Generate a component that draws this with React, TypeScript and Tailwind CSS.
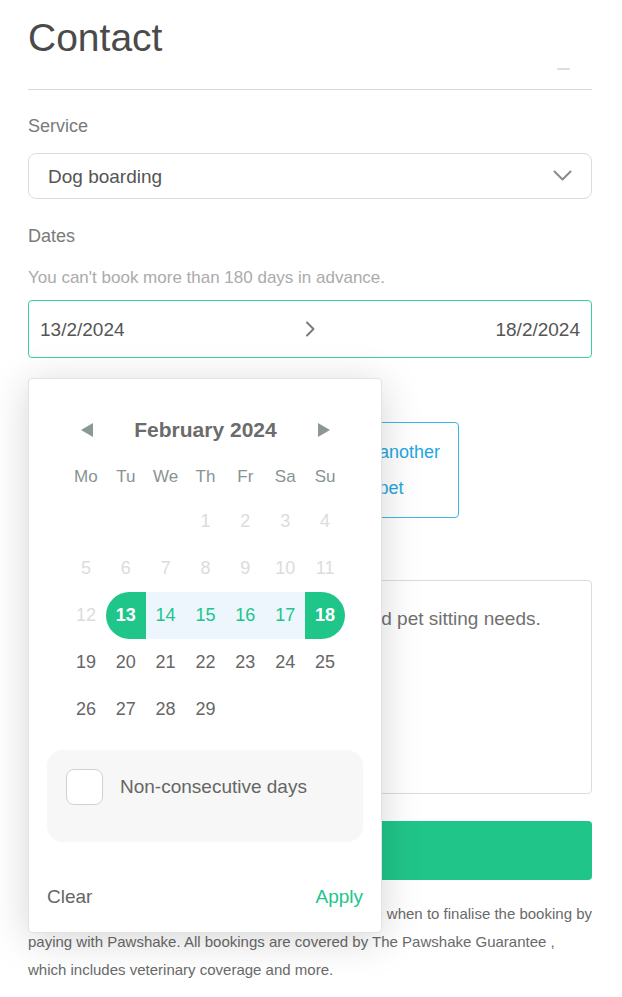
import React from "react";

const FONT = { fontFamily: '"Liberation Sans", Arial, Helvetica, sans-serif' };

function Chevron() {
  return (
    <svg width="19" height="12" viewBox="0 0 19 12" fill="none">
      <polyline points="1.5,1.5 9.5,9.5 17.5,1.5" stroke="#8a8a8a" strokeWidth="2" strokeLinecap="round" strokeLinejoin="round" />
    </svg>
  );
}

function ArrowRight() {
  return (
    <svg width="12" height="16" viewBox="0 0 12 16" fill="none">
      <polyline points="3,1.5 9.5,8 3,14.5" stroke="#7a7a7a" strokeWidth="2" strokeLinecap="round" strokeLinejoin="round" />
    </svg>
  );
}

function TriLeft() {
  return (
    <svg width="12" height="14" viewBox="0 0 12 14">
      <polygon points="12,0 12,14 0,7" fill="#8a9997" />
    </svg>
  );
}

function TriRight() {
  return (
    <svg width="12" height="14" viewBox="0 0 12 14">
      <polygon points="0,0 0,14 12,7" fill="#8a9997" />
    </svg>
  );
}

const weekdays = ["Mo", "Tu", "We", "Th", "Fr", "Sa", "Su"];

function dayClass(d: number) {
  if (d === 13) return "bg-[#20c58a] rounded-l-full text-white font-bold";
  if (d === 18) return "bg-[#20c58a] rounded-r-full text-white font-bold";
  if (d > 13 && d < 18) return "bg-[#eef6fd] text-[#20c58a]";
  if (d < 13) return "text-[#dcdcdc]";
  return "text-[#666666]";
}

function Calendar() {
  const cells: (number | null)[] = [null, null, null];
  for (let i = 1; i <= 29; i++) cells.push(i);
  while (cells.length < 35) cells.push(null);
  return (
    <div className="absolute left-0 top-[78px] z-10 w-[354px] rounded border border-[#e2e2e2] bg-white pt-[31px] pb-[15px] shadow-[0_6px_40px_rgba(0,0,0,0.17)]">
      <div className="ml-[37px] flex h-[40px] w-[279px] items-center justify-between px-[15px]">
        <TriLeft />
        <span className="text-[21px] font-bold text-[#6b6b6b]">February 2024</span>
        <TriRight />
      </div>
      <div className="ml-[37px] mt-[5px] grid h-[44px] w-[279px] grid-cols-7 items-center">
        {weekdays.map((w) => (
          <div key={w} className="text-center text-[17px] text-[#879492]">
            {w}
          </div>
        ))}
      </div>
      <div className="ml-[37px] -mt-[1px] grid w-[279px] grid-cols-7">
        {cells.map((d, i) => (
          <div
            key={i}
            className={
              "flex h-[47px] items-center justify-center text-[18px] " +
              (d === null ? "" : dayClass(d))
            }
          >
            {d ?? ""}
          </div>
        ))}
      </div>
      <div className="mx-[18px] mt-[17px] flex h-[92px] items-start gap-[17px] rounded-2xl bg-[#f7f7f7] p-[19px]">
        <div className="h-[36px] w-[37px] shrink-0 rounded-lg border border-[#d2d2d2] bg-white" />
        <div className="flex h-[36px] items-center text-[19px] text-[#666666]">Non-consecutive days</div>
      </div>
      <div className="mx-[18px] mt-[35px] flex h-[40px] items-center justify-between text-[19px]">
        <span className="text-[#666666]">Clear</span>
        <span className="text-[#20c58a]">Apply</span>
      </div>
    </div>
  );
}

export default function App() {
  return (
    <div className="min-h-[997px] bg-white pl-[28px] pr-[30px]" style={FONT}>
      <div className="border-b border-[#d8d8d8] pt-[18px] pb-[19px]">
        <h1 className="text-[39px] leading-[39px] text-[#4a4a4a]">Contact</h1>
        <div className="mt-[11px] flex justify-end pr-[22px]">
          <span className="block h-[2px] w-[13px] rounded-full bg-[#e2dcd9]" />
        </div>
      </div>

      <div className="mt-[24px] text-[18px] leading-[24px] text-[#7a7a7a]">Service</div>
      <div className="mt-[15px] flex h-[46px] items-center justify-between rounded-lg border border-[#dcdcdc] pl-[19px] pr-[19px]">
        <span className="pt-[3px] text-[19px] text-[#555555]">Dog boarding</span>
        <Chevron />
      </div>

      <div className="mt-[25px] text-[18px] leading-[24px] text-[#7a7a7a]">Dates</div>
      <div className="mt-[18px] text-[17px] leading-[24px] text-[#ababab]">
        You can't book more than 180 days in advance.
      </div>
      <div className="relative mt-[10px]">
        <div className="flex h-[58px] items-center justify-between rounded border border-[#3ccf9c] px-[11px] text-[19px] text-[#555555]">
          <span className="pt-[3px]">13/2/2024</span>
          <ArrowRight />
          <span className="pt-[3px]">18/2/2024</span>
        </div>
        <Calendar />
      </div>

      <div className="mt-[26px] text-[18px] leading-[24px] text-[#7a7a7a]">Pets</div>
      <div className="mt-[14px] flex gap-[12px]">
        <div className="flex h-[96px] w-[283px] items-center rounded border border-[#dcdcdc] px-[15px] text-[18px] text-[#555555]">
          Max
        </div>
        <div className="w-[136px] rounded border border-[#3cb6e8] py-[11px] text-center text-[18px] leading-[36px] text-[#1fa8e0]">
          Add another
          <br />
          pet
        </div>
      </div>

      <div className="mt-[26px] text-[18px] leading-[24px] text-[#7a7a7a]">Message</div>
      <div className="mt-[12px] h-[214px] rounded border border-[#dcdcdc] pl-[28px] pt-[24px]">
        <div className="whitespace-nowrap text-[19px] leading-[28px] text-[#707070]">
          Tell the sitter a little about your pets and pet sitting needs.
        </div>
      </div>

      <div className="mt-[27px] flex h-[59px] items-center justify-center rounded bg-[#20c58a] text-[19px] font-bold text-white">
        Send request
      </div>

      <div className="mt-[20px] text-[15px] leading-[28px] text-[#6a6a6a]">
        <div className="whitespace-nowrap text-right">Chat with the sitter about your needs, then decide when to finalise the booking by</div>
        <div>paying with Pawshake. All bookings are covered by The Pawshake Guarantee ,</div>
        <div>which includes veterinary coverage and more.</div>
      </div>
    </div>
  );
}
